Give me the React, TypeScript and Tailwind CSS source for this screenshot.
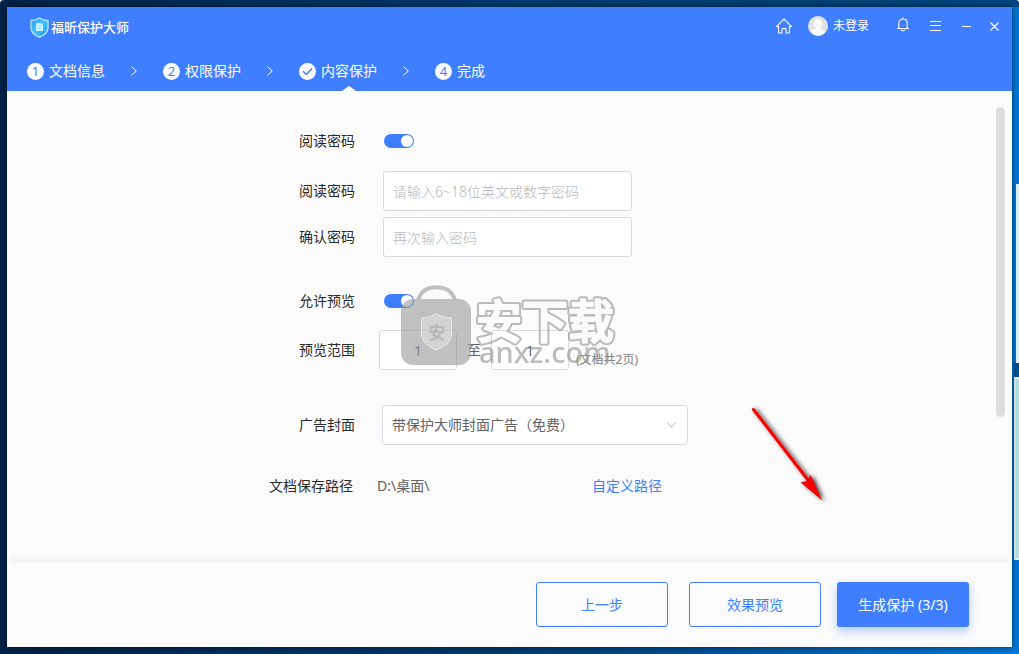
import React, { useState } from "react";

const steps = [
  { mark: "1", label: "文档信息" },
  { mark: "2", label: "权限保护" },
  { mark: "check", label: "内容保护" },
  { mark: "4", label: "完成" },
];

function ShieldLogo() {
  return (
    <svg width="19" height="21" viewBox="0 0 19 21" aria-hidden="true">
      <defs>
        <linearGradient id="shield" x1="0" y1="0" x2="1" y2="1">
          <stop offset="0" stopColor="#2f9cf0" />
          <stop offset="0.5" stopColor="#45c4fa" />
          <stop offset="1" stopColor="#2d8df0" />
        </linearGradient>
      </defs>
      <path
        d="M9.5 1C7 2.6 4 3.4 1 3.5v7.2c0 4.4 3.3 7.4 8.500 9.500 5.200-2.100 8.500-5.100 8.500-9.500V3.500C15 3.400 12 2.600 9.500 1Z"
        fill="url(#shield)"
        stroke="#b9e6fb"
        strokeWidth="1.3"
      />
      <path d="M6 6h5.200L13 7.800V14H6Z" fill="#c9f4ff" />
      <path d="M7.500 9h4M7.500 11h4" stroke="#8fe0fb" strokeWidth="0.8" />
    </svg>
  );
}

function Chevron() {
  return (
    <svg className="mx-[26px]" width="6" height="10" viewBox="0 0 6 10" fill="none" aria-hidden="true">
      <path d="M0.5 0.7 5.3 5 0.5 9.3" stroke="#fff" />
    </svg>
  );
}

function StepMark({ mark }: { mark: string }) {
  return (
    <span className="flex size-[17px] items-center justify-center rounded-full bg-white text-[13px] leading-none text-[#3f7eff]">
      {mark === "check" ? (
        <svg width="11" height="9" viewBox="0 0 11 9" fill="none" aria-label="已选">
          <path d="M1 4.3 4.3 7.500 10 1.5" stroke="#3f7eff" strokeWidth="1.5" />
        </svg>
      ) : (
        mark
      )}
    </span>
  );
}

function Toggle({ id }: { id: string }) {
  const [on, setOn] = useState(true);
  return (
    <input
      id={id}
      type="checkbox"
      role="switch"
      checked={on}
      onChange={(e) => setOn(e.target.checked)}
      className="flex h-[14px] w-[30px] cursor-pointer appearance-none items-center rounded-full bg-gray-300 px-px before:size-3 before:rounded-full before:bg-white checked:justify-end checked:bg-[#3f7eff]"
    />
  );
}

function Label({ htmlFor, children }: { htmlFor: string; children: React.ReactNode }) {
  return (
    <label htmlFor={htmlFor} className="w-[88px] shrink-0 text-right text-[#2b2b2b]">
      {children}
    </label>
  );
}

function Watermark() {
  return (
    <svg
      className="pointer-events-none absolute left-[133px] top-[194px]"
      width="222"
      height="86"
      viewBox="0 0 222 86"
      aria-hidden="true"
    >
      <defs>
        <mask id="hollow" maskUnits="userSpaceOnUse" x="0" y="0" width="222" height="86">
          <rect width="222" height="86" fill="#fff" />
          <text
            x="75"
            y="53"
            fontSize="46"
            fontWeight="500"
            fill="#000"
            stroke="#000"
            strokeWidth="2"
            strokeLinejoin="round"
            fontFamily="'Noto Sans CJK SC', sans-serif"
          >
            安下载
          </text>
        </mask>
      </defs>
      <g opacity="0.6">
        <path d="M17 15C20 5.500 27 2.200 35.500 2.200S51 5.500 54 15" fill="none" stroke="#999" strokeWidth="4" />
        <rect x="0" y="14" width="70" height="66" rx="12" fill="#999" />
        <path
          d="M35.500 28.500c-4.500 3.200-9.500 4.200-15 4.500v15c0 9 6 13 15 17 9-4 15-8 15-17V33c-5.500-.3-10.500-1.300-15-4.500Z"
          fill="#b8b8b8"
          stroke="#ddd"
        />
        <text x="36" y="54" textAnchor="middle" fontSize="17" fontWeight="700" fill="#8b8b8b" fontFamily="'Noto Sans CJK SC', sans-serif">
          安
        </text>
      </g>
      <g opacity="0.65">
        <text
          x="75"
          y="53"
          fontSize="46"
          fontWeight="500"
          fill="#999"
          stroke="#999"
          strokeWidth="6"
          strokeLinejoin="round"
          mask="url(#hollow)"
          fontFamily="'Noto Sans CJK SC', sans-serif"
        >
          安下载
        </text>
        <text x="78" y="78" fontSize="29" fontWeight="500" fill="#999" fontFamily="'Noto Sans', sans-serif">
          anxz.com
        </text>
      </g>
    </svg>
  );
}

function Arrow() {
  return (
    <svg
      className="pointer-events-none absolute left-[741px] top-[311px]"
      width="84"
      height="110"
      viewBox="0 0 84 110"
      aria-hidden="true"
    >
      <defs>
        <filter id="soft" x="-20%" y="-20%" width="150%" height="150%">
          <feDropShadow dx="2.5" dy="1" stdDeviation="2.2" floodColor="#000" floodOpacity="0.8" />
        </filter>
      </defs>
      <g filter="url(#soft)" fill="#f90000">
        <path d="M5.500 7.500 60 78" stroke="#f90000" strokeWidth="3" strokeLinecap="round" />
        <path d="M73.500 97.500 53 80.500 59 79.500 62.500 73.500Z" stroke="#c00" strokeWidth="0.6" />
      </g>
    </svg>
  );
}

const field = "h-10 rounded-[3px] border border-[#d9d9e2] bg-white outline-none focus:border-[#3f7eff]";

export default function App() {
  return (
    <div className="bg-white font-['Noto_Sans','Noto_Sans_CJK_SC',sans-serif] text-sm leading-5">
      <div className="relative flex min-h-screen overflow-hidden rounded-t bg-linear-to-r from-[#002347] via-[#003a70] to-[#0078d7] p-[7px]">
        <div className="absolute right-0 top-0 h-[7px] w-1/2 bg-linear-to-r from-[#003a6c] to-[#004680]" />
        <div className="absolute right-0 top-[184px] h-[179px] w-[3px] bg-[#e0f6f6]" />
        <div className="absolute right-0 top-[363px] h-[14px] w-[5px] bg-[#00509a]" />
        <div className="absolute right-0 top-[377px] h-[183px] w-[5px] border-2 border-r-0 border-[#e5f7f8] bg-[#b5e4e6]" />

        <div className="relative flex min-w-0 flex-1 flex-col bg-[#fbfbfb] shadow-[0_0_6px_rgba(0,0,0,0.6)]">
          <header className="bg-[#3f7eff] text-white">
            <div className="flex h-10 items-center pl-[23px] pr-3">
              <ShieldLogo />
              <h1 className="ml-0.5 text-[13px] font-medium">福昕保护大师</h1>
              <div className="-mt-0.5 ml-auto flex items-center">
                <button type="button" aria-label="主页" className="mr-4">
                  <svg width="16" height="16" viewBox="0 0 16 16" fill="none" stroke="#fff" strokeWidth="1.1">
                    <path d="M0.500 8.700 8 1l7.500 7.700H13.400V15H10v-4.500H6V15H2.600V8.700Z" strokeLinejoin="round" />
                  </svg>
                </button>
                <button type="button" className="mr-7 flex items-center gap-[5px] text-[12px]">
                  <svg width="20" height="20" viewBox="0 0 20 20" aria-hidden="true">
                    <circle cx="10" cy="10" r="10" fill="#e2e2e2" />
                    <path d="M10 3c-2.700 0-4.200 2-4.200 4.500 0 2 .8 3.500 2 4.300v1c-2 .7-4 1.500-4.800 3.200A9.500 9.500 0 0 0 10 19.500 9.500 9.500 0 0 0 17 16c-.8-1.700-2.800-2.500-4.800-3.200v-1c1.200-.8 2-2.300 2-4.300C14.200 5 12.700 3 10 3Z" fill="#fcfcfc" />
                  </svg>
                  未登录
                </button>
                <button type="button" aria-label="通知" className="-mt-1 mr-[21px]">
                  <svg width="12" height="15" viewBox="0 0 12 15" fill="none" stroke="#fff" strokeWidth="1.1">
                    <path d="M0 11.500h12M1.800 11.500V6.200C1.800 3.500 3.500 2 6 2s4.200 1.500 4.200 4.200v5.300M6 2V.4M4 12.500c.4 1.800 3.600 1.800 4 0" />
                  </svg>
                </button>
                <button type="button" aria-label="菜单" className="mr-[21px]">
                  <svg width="11" height="10" viewBox="0 0 11 10" stroke="#fff">
                    <path d="M0 .5h11M0 4.500h11M0 9.500h11" />
                  </svg>
                </button>
                <button type="button" aria-label="最小化" className="mr-[19px]">
                  <svg width="9" height="9" viewBox="0 0 9 9" stroke="#fff">
                    <path d="M0 4.500h9" />
                  </svg>
                </button>
                <button type="button" aria-label="关闭" className="mr-px">
                  <svg width="9" height="9" viewBox="0 0 9 9" stroke="#fff" strokeWidth="1.1">
                    <path d="m.5.5 8 8m0-8-8 8" />
                  </svg>
                </button>
              </div>
            </div>
            <ol className="mt-1 flex h-10 pl-5">
              {steps.map((step, i) => (
                <li key={step.label} className="flex items-center">
                  {i > 0 && <Chevron />}
                  <span className="relative flex h-10 items-center gap-[5px]">
                    <StepMark mark={step.mark} />
                    {step.label}
                    {step.mark === "check" && (
                      <svg className="absolute bottom-0 left-[43px]" width="14" height="5" viewBox="0 0 14 5" aria-hidden="true">
                        <path d="M0 5 6 .4Q7-.4 8 .4L14 5Z" fill="#fbfbfb" />
                      </svg>
                    )}
                  </span>
                </li>
              ))}
            </ol>
          </header>

          <main className="flex flex-1 items-start">
            <form className="relative min-w-0 flex-1 pb-10 pl-[260px] pt-10" onSubmit={(e) => e.preventDefault()}>
              <div className="flex items-center gap-[29px]">
                <Label htmlFor="read-on">阅读密码</Label>
                <Toggle id="read-on" />
              </div>
              <div className="mt-5 flex items-center gap-7">
                <Label htmlFor="password">阅读密码</Label>
                <input
                  id="password"
                  type="password"
                  placeholder="请输入6~18位英文或数字密码"
                  className={`${field} w-[249px] px-[9px] placeholder:font-light placeholder:text-[#b8b8b8]`}
                />
              </div>
              <div className="mt-1.5 flex items-center gap-7">
                <Label htmlFor="confirm">确认密码</Label>
                <input
                  id="confirm"
                  type="password"
                  placeholder="再次输入密码"
                  className={`${field} w-[249px] px-[9px] placeholder:font-light placeholder:text-[#b8b8b8]`}
                />
              </div>
              <div className="mt-[34px] flex items-center gap-[29px]">
                <Label htmlFor="preview-on">允许预览</Label>
                <Toggle id="preview-on" />
              </div>
              <div className="mt-[19px] flex items-center gap-6">
                <Label htmlFor="from">预览范围</Label>
                <div className="flex items-center text-[#606266]">
                  <input id="from" defaultValue="1" className={`${field} w-[78px] text-center`} />
                  <label htmlFor="to" className="mx-[10px]">至</label>
                  <input id="to" defaultValue="1" className={`${field} w-[78px] text-center`} />
                  <span className="ml-[7px] self-end text-[12px] text-[#808080]">(文档共2页)</span>
                </div>
              </div>
              <div className="mt-[35px] flex items-center gap-[27px]">
                <Label htmlFor="cover">广告封面</Label>
                <div className="relative">
                  <select id="cover" className={`${field} w-[306px] appearance-none px-[9px] text-[#606266]`}>
                    <option>带保护大师封面广告（免费）</option>
                  </select>
                  <svg className="pointer-events-none absolute right-3 top-[17px]" width="9" height="6" viewBox="0 0 9 6" fill="none" aria-hidden="true">
                    <path d="m.5.5 4 4.500 4-4.500" stroke="#bcbfc6" strokeWidth="1.1" />
                  </svg>
                </div>
              </div>
              <div className="mt-[31px] flex items-center gap-[22px]">
                <span className="w-[88px] shrink-0 pr-0.5 text-right text-[#2b2b2b]">文档保存路径</span>
                <span className="w-[193px] text-[#606266]">D:\桌面\</span>
                <a href="#path" className="text-[#3f7eff]">自定义路径</a>
              </div>
              <div className="absolute left-[261px] top-0">
                <Watermark />
              </div>
              <Arrow />
            </form>
            <div className="mr-[7px] mt-4 h-[310px] w-[9px] shrink-0 rounded-full bg-[#ddd]" />
          </main>

          <div className="mx-[3px] h-3 bg-linear-to-b from-[#fbfbfb] to-[#f3f3f3]" />
          <footer className="flex justify-end pb-5 pr-[43px] pt-[19px]">
            <button type="button" className="h-[45px] w-[132px] rounded-[3px] border border-[#3f7eff] text-[#3f7eff]">
              上一步
            </button>
            <button type="button" className="ml-[21px] h-[45px] w-[132px] rounded-[3px] border border-[#3f7eff] text-[#3f7eff]">
              效果预览
            </button>
            <button type="button" className="ml-4 h-[45px] w-[132px] rounded-[3px] bg-[#3f7eff] text-white shadow-[0_4px_10px_rgba(63,126,255,0.4)]">
              生成保护 (3/3)
            </button>
          </footer>
        </div>
      </div>
    </div>
  );
}
